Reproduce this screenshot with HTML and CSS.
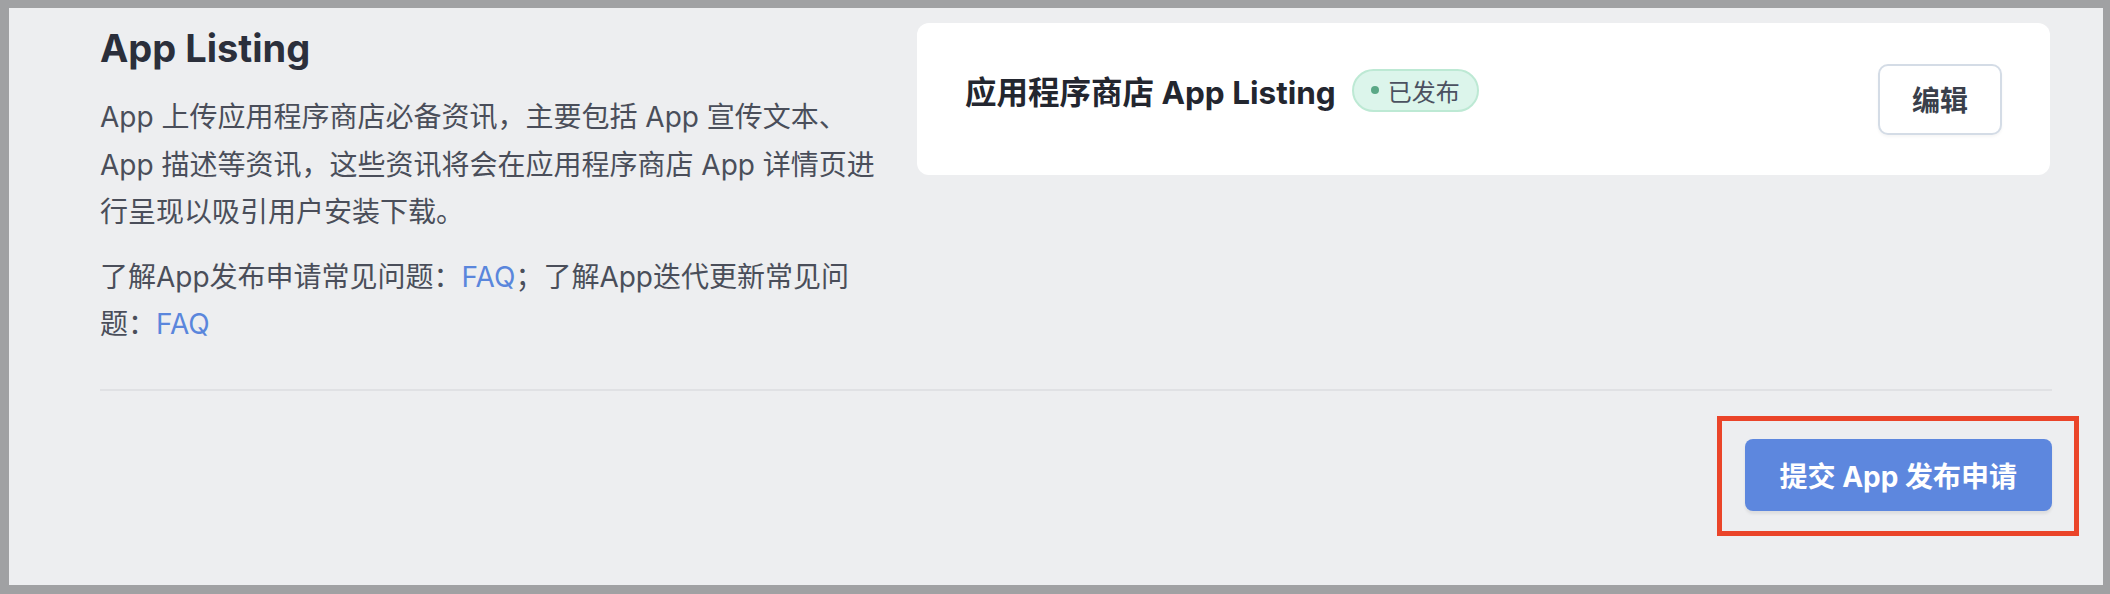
FILE: index.html
```html
<!DOCTYPE html>
<html lang="zh-CN">
<head>
  <meta charset="UTF-8">
  <meta name="viewport" content="width=device-width, initial-scale=1.0">
  <title>App Listing</title>
  <link rel="stylesheet" href="styles.css">
</head>
<body>
  <div class="frame">
    <div class="top">
      <div class="intro">
        <h2 class="title">App Listing</h2>
        <p class="desc">App 上传应用程序商店必备资讯，主要包括 App 宣传文本、App 描述等资讯，这些资讯将会在应用程序商店 App 详情页进行呈现以吸引用户安装下载。</p>
        <p class="desc">了解App发布申请常见问题：<a href="#" class="link">FAQ</a>；了解App迭代更新常见问题：<a href="#" class="link">FAQ</a></p>
      </div>

      <div class="card">
        <div class="listing">
          <span class="listing-name">应用程序商店 App Listing</span>
          <span class="badge"><span class="dot"></span>已发布</span>
        </div>
        <button class="edit">编辑</button>
      </div>
    </div>

    <div class="divider"></div>

    <div class="actions">
      <div class="submit-wrap">
        <button class="submit">提交 App 发布申请</button>
        <div class="highlight"></div>
      </div>
    </div>
  </div>
</body>
</html>
```

FILE: styles.css
```css
* {
  box-sizing: border-box;
}

body {
  margin: 0;
  background: #a0a1a3;
  font-family: 'Inter', 'Noto Sans CJK SC', sans-serif;
}

.frame {
  margin: 8px 7px 9px 9px;
  height: 577px;
  background: #edeef0;
  padding: 15px 51px 0 91px;
}

.top {
  display: flex;
  gap: 32px;
}

.intro {
  width: 785px;
  flex-shrink: 0;
}

.title {
  margin: 0 0 21px;
  font-size: 38px;
  line-height: 50px;
  font-weight: 700;
  color: #2b2f3b;
}

.desc {
  margin: 0 0 17px;
  font-size: 28px;
  line-height: 47.5px;
  color: #4a4e5a;
}

.desc:last-child {
  margin-bottom: 0;
}

.link {
  color: #5a86dc;
  text-decoration: none;
}

.card {
  flex: 1;
  height: 152px;
  margin-right: 2px;
  background: #fff;
  border-radius: 12px;
  padding: 0 48px 0 48px;
  display: flex;
  align-items: center;
  justify-content: space-between;
}

.listing {
  display: flex;
  align-items: center;
  gap: 16px;
  margin-bottom: 18px;
}

.listing-name {
  font-size: 31.5px;
  font-weight: 700;
  color: #23262f;
}

.badge {
  display: flex;
  align-items: center;
  gap: 9px;
  height: 43px;
  padding: 0 17px 0 17px;
  border: 2px solid #bde9d4;
  border-radius: 22px;
  background: #dcf5eb;
  font-size: 24px;
  color: #4b5160;
}

.dot {
  width: 8px;
  height: 8px;
  border-radius: 50%;
  background: #5aa886;
}

.edit {
  width: 124px;
  height: 71px;
  border: 2px solid #d4dce6;
  border-radius: 10px;
  background: #fff;
  font-family: inherit;
  font-size: 28px;
  font-weight: 700;
  color: #3a3f4b;
  box-shadow: 0 2px 3px rgba(0, 0, 0, 0.04);
}

.divider {
  height: 2px;
  margin-top: 40px;
  background: #e0e1e4;
}

.actions {
  display: flex;
  justify-content: flex-end;
  padding-top: 48px;
}

.submit-wrap {
  position: relative;
}

.submit {
  height: 72px;
  padding: 0 35px;
  border: none;
  border-radius: 8px;
  background: #5d87de;
  font-family: inherit;
  font-size: 28px;
  font-weight: 700;
  color: #fff;
  box-shadow: 0 3px 3px rgba(0, 0, 0, 0.07);
}

/* red annotation box around the submit button */
.highlight {
  position: absolute;
  top: -23px;
  right: -27px;
  bottom: -25px;
  left: -28px;
  border: 5px solid #ea4429;
}
```
